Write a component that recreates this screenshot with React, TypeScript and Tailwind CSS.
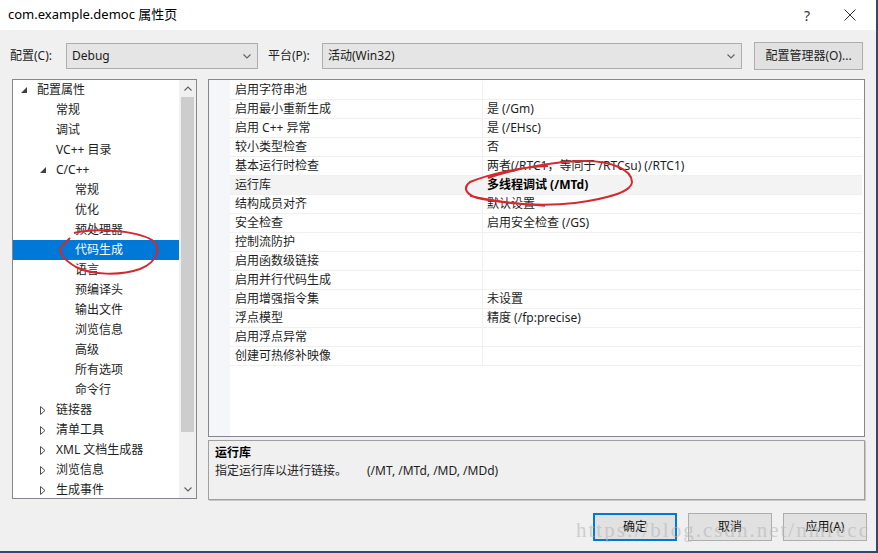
import React from "react";

type TreeItem = { label: string; level: number; icon?: "open" | "closed"; selected?: boolean };

const tree: TreeItem[] = [
  { label: "配置属性", level: 0, icon: "open" },
  { label: "常规", level: 1 },
  { label: "调试", level: 1 },
  { label: "VC++ 目录", level: 1 },
  { label: "C/C++", level: 1, icon: "open" },
  { label: "常规", level: 2 },
  { label: "优化", level: 2 },
  { label: "预处理器", level: 2 },
  { label: "代码生成", level: 2, selected: true },
  { label: "语言", level: 2 },
  { label: "预编译头", level: 2 },
  { label: "输出文件", level: 2 },
  { label: "浏览信息", level: 2 },
  { label: "高级", level: 2 },
  { label: "所有选项", level: 2 },
  { label: "命令行", level: 2 },
  { label: "链接器", level: 1, icon: "closed" },
  { label: "清单工具", level: 1, icon: "closed" },
  { label: "XML 文档生成器", level: 1, icon: "closed" },
  { label: "浏览信息", level: 1, icon: "closed" },
  { label: "生成事件", level: 1, icon: "closed" },
];

const rows: [string, string, boolean?][] = [
  ["启用字符串池", ""],
  ["启用最小重新生成", "是 (/Gm)"],
  ["启用 C++ 异常", "是 (/EHsc)"],
  ["较小类型检查", "否"],
  ["基本运行时检查", "两者(/RTC1，等同于 /RTCsu) (/RTC1)"],
  ["运行库", "多线程调试 (/MTd)", true],
  ["结构成员对齐", "默认设置"],
  ["安全检查", "启用安全检查 (/GS)"],
  ["控制流防护", ""],
  ["启用函数级链接", ""],
  ["启用并行代码生成", ""],
  ["启用增强指令集", "未设置"],
  ["浮点模型", "精度 (/fp:precise)"],
  ["启用浮点异常", ""],
  ["创建可热修补映像", ""],
];

const Chevron = ({ up = false }: { up?: boolean }) => (
  <svg width="8" height="5" viewBox="0 0 8 5" className={up ? "rotate-180" : ""}>
    <path d="M0.5 0.5 L4 4 L7.5 0.5" fill="none" stroke="#606060" strokeWidth="1.1" />
  </svg>
);

const TreeIcon = ({ kind }: { kind?: "open" | "closed" }) => {
  if (kind === "open")
    return (
      <svg width="6" height="6" viewBox="0 0 6 6">
        <path d="M6 0 L6 6 L0 6 Z" fill="#404040" />
      </svg>
    );
  if (kind === "closed")
    return (
      <svg width="6" height="9" viewBox="0 0 6 9">
        <path d="M0.5 0.5 L5 4.5 L0.5 8.5 Z" fill="none" stroke="#505050" strokeWidth="1" />
      </svg>
    );
  return null;
};

const Combo = ({ text, w }: { text: string; w: string }) => (
  <div className={`${w} h-[26px] bg-[#e5e5e5] border border-[#adadad] flex items-center pl-[5px] pr-[6px]`}>
    <span className="flex-1 text-[#1a1a1a]">{text}</span>
    <Chevron />
  </div>
);

const Btn = ({ text, primary = false }: { text: string; primary?: boolean }) => (
  <div
    className={`w-[84px] h-[28px] flex items-center justify-center bg-[#e1e1e1] text-[#111] ${
      primary ? "border-2 border-[#0078d7]" : "border border-[#adadad]"
    }`}
  >
    {text}
  </div>
);

export default function App() {
  return (
    <div
      className="relative w-[878px] h-[553px] bg-[#f0f0f0] flex flex-col text-[12px] text-[#1e1e1e] overflow-hidden border-r-2 border-b-2 border-[#2c4a73]"
      style={{ fontFamily: '"Noto Sans", "Noto Sans CJK SC", sans-serif' }}
    >
      {/* title bar */}
      <div className="h-[30px] bg-white flex items-center pl-[8px] shrink-0">
        <span className="flex-1 text-[13px] text-black">com.example.democ 属性页</span>
        <span className="text-[14px] text-[#333] mr-[34px]">?</span>
        <svg width="12" height="12" viewBox="0 0 12 12" className="mr-[20px]">
          <path d="M0.5 0.5 L11.5 11.5 M11.5 0.5 L0.5 11.5" stroke="#333" strokeWidth="1" />
        </svg>
      </div>

      {/* toolbar */}
      <div className="flex items-center h-[28px] mt-[12px] pl-[10px] shrink-0">
        <span className="w-[56px]">配置(C):</span>
        <Combo text="Debug" w="w-[192px]" />
        <span className="ml-[10px] w-[54px]">平台(P):</span>
        <Combo text="活动(Win32)" w="w-[420px]" />
        <div className="ml-[12px] w-[109px] h-[28px] border border-[#adadad] bg-[#e1e1e1] flex items-center justify-center">
          配置管理器(O)...
        </div>
      </div>

      {/* main */}
      <div className="flex mt-[9px] pl-[12px] h-[421px] shrink-0">
        {/* tree */}
        <div className="w-[185px] h-[420px] bg-white border border-[#828790] flex">
          <div className="flex-1 flex flex-col">
            {tree.map((t, i) => (
              <div
                key={i}
                className={`h-[20px] flex items-center shrink-0 ${t.selected ? "bg-[#0078d7] text-white" : ""}`}
              >
                <div
                  className={`flex items-center justify-center w-[10px] ${
                    t.level === 0 ? "ml-[6px]" : t.level === 1 ? "ml-[25px]" : "ml-[44px]"
                  }`}
                >
                  <TreeIcon kind={t.icon} />
                </div>
                <span className="ml-[8px]">{t.label}</span>
              </div>
            ))}
          </div>
          <div className="w-[17px] bg-[#f0f0f0] flex flex-col items-center">
            <div className="h-[17px] flex items-center justify-center">
              <Chevron up />
            </div>
            <div className="w-[13px] h-[335px] bg-[#cdcdcd]" />
            <div className="flex-1" />
            <div className="h-[17px] flex items-center justify-center">
              <Chevron />
            </div>
          </div>
        </div>

        {/* right */}
        <div className="ml-[11px] w-[657px] flex flex-col">
          <div className="h-[359px] bg-white border border-[#828790] flex">
            <div className="w-[21px] bg-[#f4f6f9] shrink-0" />
            <div className="flex-1 flex flex-col pr-[2px] pt-[1px]">
              {rows.map(([n, v, sel], i) => (
                <div
                  key={i}
                  className={`h-[19px] flex border-b border-[#f0f0f0] shrink-0 ${sel ? "bg-[#f3f3f3]" : ""}`}
                >
                  <div className="w-[253px] pl-[5px] flex items-center border-r border-[#f0f0f0]">{n}</div>
                  <div className={`flex-1 pl-[4px] flex items-center ${sel ? "font-bold text-black" : ""}`}>{v}</div>
                </div>
              ))}
            </div>
          </div>
          <div className="mt-[3px] h-[60px] border border-[#a0a0a0] bg-[#f0f0f0] px-[6px] pt-[3px] flex flex-col shadow-[1px_1px_0_#c8c8c8]">
            <span className="font-bold text-black leading-[18px]">运行库</span>
            <span className="leading-[18px]">
              指定运行库以进行链接。<span className="ml-[20px]">(/MT, /MTd, /MD, /MDd)</span>
            </span>
          </div>
        </div>
      </div>

      {/* buttons */}
      <div className="flex justify-end gap-[11px] pr-[9px] mt-[13px]">
        <Btn text="确定" primary />
        <Btn text="取消" />
        <Btn text="应用(A)" />
      </div>

      {/* watermark */}
      <div
        className="absolute left-[576px] top-[515px] text-[21px] tracking-[2px] text-[#b8b8b8] opacity-60 pointer-events-none whitespace-nowrap"
        style={{ fontFamily: '"Liberation Serif", serif' }}
      >
        https://blog.csdn.net/nmrecc
      </div>

      {/* red annotations */}
      <svg className="absolute left-0 top-0 pointer-events-none" width="878" height="553" viewBox="0 0 878 553">
        <path
          d="M74 233 C95 228 135 230 152 240 C162 247 158 262 140 269 C120 276 92 275 76 267 C64 260 58 252 61 247 L70 238"
          fill="none"
          stroke="#d42a2f"
          strokeWidth="2"
        />
        <path
          d="M548 166 C520 167 490 174 470 182 C462 188 466 196 482 199 C510 204 540 207 575 203 C605 199 632 192 632 182 C632 170 612 161 585 161 C560 161 520 167 488 178"
          fill="none"
          stroke="#d42a2f"
          strokeWidth="2"
        />
        <path d="M470 196 C490 200 515 204 545 206" fill="none" stroke="#d42a2f" strokeWidth="1.6" />
      </svg>
    </div>
  );
}
